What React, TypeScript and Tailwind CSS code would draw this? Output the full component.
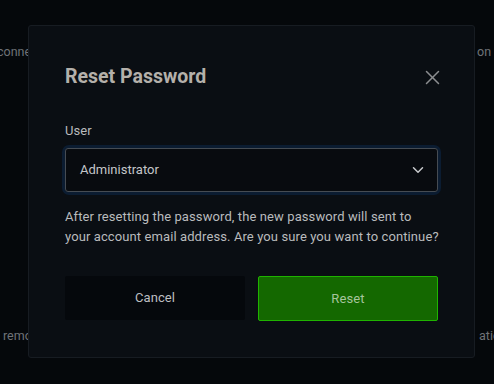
import React from 'react';

const font = { fontFamily: 'Roboto, "Noto Sans", Arial, sans-serif' };

const CloseIcon: React.FC = () => (
  <svg width="15" height="15" viewBox="0 0 15 15" fill="none" stroke="#8b8d90" strokeWidth="1.5" strokeLinecap="round">
    <path d="M1.5 1.5 13.5 13.5" />
    <path d="M13.5 1.5 1.5 13.5" />
  </svg>
);

const Chevron: React.FC = () => (
  <svg width="12" height="8" viewBox="0 0 12 8" fill="none" stroke="#c9cbce" strokeWidth="1.5" strokeLinecap="round" strokeLinejoin="round">
    <path d="M1.5 1.8 6 6.2l4.5-4.4" />
  </svg>
);

export default function App() {
  return (
    <div
      className="relative w-[494px] h-[384px] overflow-hidden bg-[#05080b] text-[#6f7378] text-[12.5px]"
      style={font}
    >
      {/* Page behind the dialog */}
      <div className="flex flex-col pt-[42px]">
        <div className="grid grid-cols-[477px_1fr] whitespace-nowrap overflow-hidden leading-[20px]">
          <span className="overflow-hidden ml-[-3px]">connected devices will be notified</span>
          <span>on if</span>
        </div>
        <div className="grid grid-cols-[475px_1fr] whitespace-nowrap overflow-hidden leading-[20px] mt-[264px] pl-[3px]">
          <span className="overflow-hidden">remove this account</span>
          <span className="pl-[1px]">atio</span>
        </div>
      </div>

      {/* Dialog */}
      <div className="absolute left-[28px] top-[25px] w-[447px] h-[333px] rounded-[3px] border border-[#171c22] bg-[#0a0e13] px-[36px] pt-[38px]">
        <div className="flex items-center justify-between">
          <h2 className="text-[19.5px] leading-[26px] font-bold text-[#b4b0aa]">Reset Password</h2>
          <button className="mr-[-2px] flex items-center justify-center">
            <CloseIcon />
          </button>
        </div>

        <div className="mt-[31px] text-[13px] leading-[20px] tracking-[0.1px] text-[#b9bbbd]">User</div>

        <div className="mt-[7px] rounded-[4px] ring-[3px] ring-[#0b1c31]">
          <div className="flex h-[44px] items-center justify-between rounded-[3px] border border-[#464c53] bg-[#080b0f] pl-[14px] pr-[13px]">
            <span className="text-[13px] text-[#c4c6c9]">Administrator</span>
            <Chevron />
          </div>
        </div>

        <p className="mt-[15px] whitespace-nowrap text-[13px] leading-[20px] tracking-[0.1px] text-[#b9bbbd]">
          After resetting the password, the new password will sent to
          <br />
          your account email address. Are you sure you want to continue?
        </p>

        <div className="mt-[29px] grid grid-cols-2 gap-[13px]">
          <button className="h-[44px] rounded-[2px] bg-[#05080c] text-[13px] tracking-[0.1px] text-[#bdbfc1]">Cancel</button>
          <button className="h-[45px] rounded-[2px] border border-[#1fb300] bg-[#146800] text-[13px] tracking-[0.1px] text-[#a6c59c]">Reset</button>
        </div>
      </div>
    </div>
  );
}
